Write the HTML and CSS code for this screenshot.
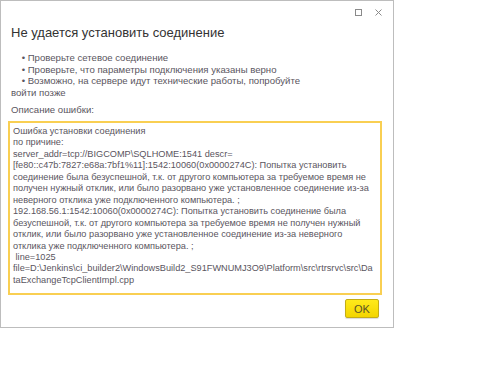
FILE: index.html
```html
<!DOCTYPE html>
<html lang="ru">
<head>
    <meta charset="UTF-8">
    <title>Не удается установить соединение</title>
    <link rel="stylesheet" href="styles.css">
</head>
<body>
    <div class="dialog">
        <div class="titlebar">
            <span class="win-btn maximize"></span>
            <svg class="win-btn close" width="7" height="7" viewBox="0 0 7 7">
                <path d="M0.5 0.5 L6.5 6.5 M6.5 0.5 L0.5 6.5" stroke="#8a8a8a" stroke-width="1" fill="none"/>
            </svg>
        </div>
        <h1 class="title">Не удается установить соединение</h1>
        <p class="hints">    • Проверьте сетевое соединение
    • Проверьте, что параметры подключения указаны верно
    • Возможно, на сервере идут технические работы, попробуйте войти позже</p>
        <p class="label">Описание ошибки:</p>
        <div class="details">Ошибка установки соединения
по причине:
server_addr=tcp://BIGCOMP\SQLHOME:1541 descr=[fe80::c47b:7827:e68a:7bf1%11]:1542:10060(0x0000274C): Попытка установить соединение была безуспешной, т.к. от другого компьютера за требуемое время не получен нужный отклик, или было разорвано уже установленное соединение из-за неверного отклика уже подключенного компьютера. ;
192.168.56.1:1542:10060(0x0000274C): Попытка установить соединение была безуспешной, т.к. от другого компьютера за требуемое время не получен нужный отклик, или было разорвано уже установленное соединение из-за неверного отклика уже подключенного компьютера. ;
 line=1025 file=D:\Jenkins\ci_builder2\WindowsBuild2_S91FWNUMJ3O9\Platform\src\rtrsrvc\src\DataExchangeTcpClientImpl.cpp</div>
        <div class="footer">
            <button class="ok-button">OK</button>
        </div>
    </div>
</body>
</html>
```

FILE: styles.css
```css
body {
    margin: 0;
    background-color: #ffffff;
    font-family: "Liberation Sans", Arial, sans-serif;
}

.dialog {
    width: 392px;
    height: 326px;
    border: 1px solid #bdbdbd;
    display: flex;
    flex-direction: column;
    background-color: #ffffff;
}

.titlebar {
    height: 22px;
    display: flex;
    justify-content: flex-end;
    align-items: center;
    gap: 13px;
    padding-right: 11px;
}

.win-btn {
    display: block;
}

.maximize {
    width: 5px;
    height: 5px;
    border: 1px solid #8a8a8a;
}

.title {
    margin: 2px 0 0 10px;
    font-size: 13px;
    font-weight: normal;
    color: #333333;
    line-height: 16px;
}

.hints {
    margin: 11px 0 0 10px;
    width: 300px;
    font-size: 9.6px;
    line-height: 11.5px;
    color: #5a5560;
    white-space: pre-wrap;
}

.label {
    margin: 6px 0 0 10px;
    font-size: 9.6px;
    line-height: 12px;
    color: #5a5560;
}

.details {
    box-sizing: border-box;
    margin: 5px 0 0 7px;
    width: 374px;
    height: 174px;
    padding: 3px 7px 0 3px;
    border: 2px solid #f9cf52;
    font-size: 9.2px;
    line-height: 11.46px;
    color: #5a5560;
    white-space: pre-wrap;
    word-wrap: break-word;
    overflow: hidden;
}

.footer {
    display: flex;
    justify-content: flex-end;
    padding: 4px 14px 0 0;
}

.ok-button {
    width: 34px;
    height: 19px;
    padding: 0;
    border: 1px solid #c4ad16;
    border-radius: 2px;
    background: linear-gradient(#ffea1a, #f3d500);
    font-family: "Liberation Sans", Arial, sans-serif;
    font-size: 11px;
    color: #5b5326;
    box-shadow: 0 1px 1px rgba(0, 0, 0, 0.15);
}
```
